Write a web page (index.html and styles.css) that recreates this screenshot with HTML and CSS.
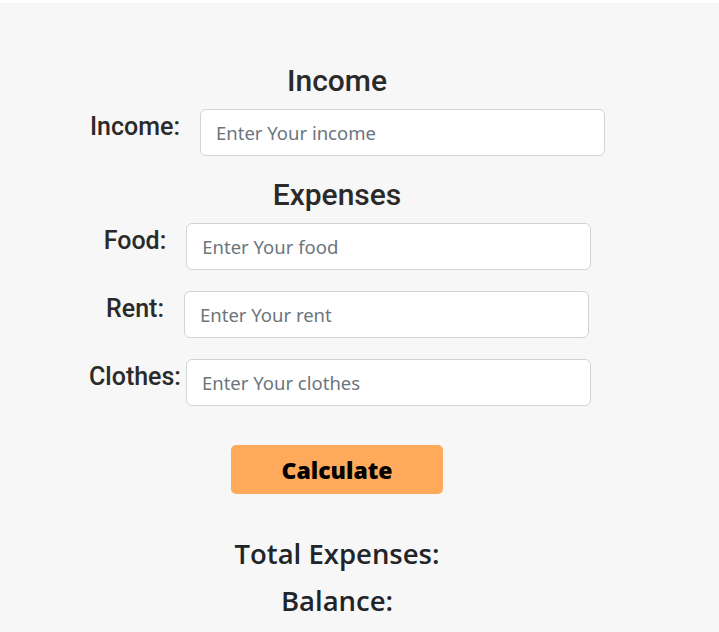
FILE: index.html
```html
<!DOCTYPE html>
<html lang="en">
<head>
<meta charset="utf-8">
<title>Expense Calculator</title>
<link rel="stylesheet" href="styles.css">
</head>
<body>
<main class="app">
  <h2 class="section-title">Income</h2>
  <div class="field">
    <label class="field-label" for="income">Income:</label>
    <input class="field-input" id="income" type="text" placeholder="Enter Your income">
  </div>
  <h2 class="section-title">Expenses</h2>
  <div class="field">
    <label class="field-label" for="food">Food:</label>
    <input class="field-input" id="food" type="text" placeholder="Enter Your food">
  </div>
  <div class="field">
    <label class="field-label" for="rent">Rent:</label>
    <input class="field-input" id="rent" type="text" placeholder="Enter Your rent">
  </div>
  <div class="field field-tight">
    <label class="field-label" for="clothes">Clothes:</label>
    <input class="field-input" id="clothes" type="text" placeholder="Enter Your clothes">
  </div>
  <button class="calc-btn" type="button">Calculate</button>
  <div class="results">
    <h3 class="result-line">Total Expenses:</h3>
    <h3 class="result-line">Balance:</h3>
  </div>
</main>
</body>
</html>
```
FILE: styles.css
```css
html, body {
  margin: 0;
  padding: 0;
  background: #ffffff;
}

.app {
  margin-top: 3px;
  min-height: 629px;
  box-sizing: border-box;
  background: #f7f7f7;
  padding: 60px 45px 0 0;
  display: flex;
  flex-direction: column;
  align-items: center;
  color: #212529;
}

.section-title {
  margin: 0 0 10px;
  font-family: Roboto, "Liberation Sans", sans-serif;
  font-weight: 500;
  font-size: 30px;
  line-height: 36px;
  color: #2a2a2a;
}

.field {
  display: flex;
  align-items: flex-start;
  justify-content: center;
  gap: 20px;
  padding-left: 21px;
  margin-bottom: 21px;
}

.field-tight {
  gap: 5px;
  padding-left: 6px;
}

.field-label {
  font-family: Roboto, "Liberation Sans", sans-serif;
  font-weight: 500;
  font-size: 25px;
  line-height: 36px;
  color: #2a2a2a;
}

.field-input {
  width: 405px;
  height: 47px;
  box-sizing: border-box;
  border: 1px solid #ced4da;
  border-radius: 6px;
  background: #ffffff;
  padding: 0 15px;
  font-family: "Noto Sans", "Open Sans", sans-serif;
  font-size: 18.5px;
  color: #212529;
  outline: none;
}

.field-input::placeholder {
  color: #6c757d;
}

.calc-btn {
  margin-top: 18px;
  width: 212px;
  height: 49px;
  border: none;
  border-radius: 5px;
  background: #ffaa5a;
  font-family: "Open Sans", "Noto Sans", sans-serif;
  font-weight: 800;
  font-size: 23px;
  color: #000000;
  cursor: pointer;
}

.results {
  margin-top: 36px;
  display: flex;
  flex-direction: column;
  align-items: center;
}

.result-line {
  margin: 0;
  font-family: "Open Sans", "Noto Sans", sans-serif;
  font-weight: 600;
  font-size: 27.5px;
  line-height: 47px;
  color: #212529;
}
```
